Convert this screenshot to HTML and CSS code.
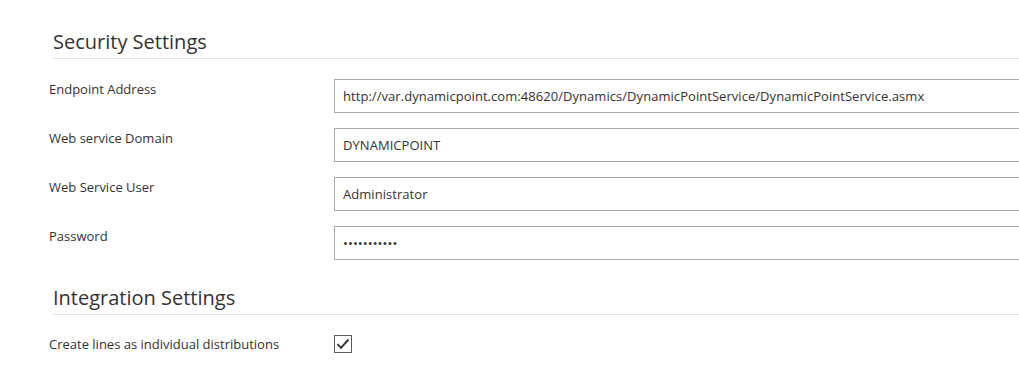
FILE: index.html
```html
<!DOCTYPE html>
<html lang="en">
<head>
    <meta charset="UTF-8">
    <meta name="viewport" content="width=device-width, initial-scale=1.0">
    <title>Settings</title>
    <link rel="stylesheet" href="styles.css">
</head>
<body>

<div class="page">

    <!-- Security -->
    <h2 class="section-title">Security Settings</h2>
    <div class="form-row">
        <label for="endpoint">Endpoint Address</label>
        <input type="text" id="endpoint" value="http://var.dynamicpoint.com:48620/Dynamics/DynamicPointService/DynamicPointService.asmx">
    </div>
    <div class="form-row">
        <label for="domain">Web service Domain</label>
        <input type="text" id="domain" value="DYNAMICPOINT">
    </div>
    <div class="form-row">
        <label for="user">Web Service User</label>
        <input type="text" id="user" value="Administrator">
    </div>
    <div class="form-row">
        <label for="password">Password</label>
        <input type="password" id="password" value="secretpass1">
    </div>

    <!-- Integration -->
    <h2 class="section-title second">Integration Settings</h2>
    <div class="form-row check-row">
        <label>Create lines as individual distributions</label>
        <span class="checkbox">
            <svg width="16" height="16" viewBox="0 0 16 16"><path d="M2.5 8.2 L6 11.8 L13.5 3.5" fill="none" stroke="#333" stroke-width="1.9"/></svg>
        </span>
    </div>

</div>

</body>
</html>
```

FILE: styles.css
```css
html, body {
    margin: 0;
    overflow: hidden;
    background: #fff;
}
body {
    font-family: "Open Sans", sans-serif;
    color: #333;
}
.page {
    padding: 28px 0 0 49px;
}
.section-title {
    margin: 0 0 20px 4px;
    padding-bottom: 2px;
    font-size: 20px;
    font-weight: 400;
    line-height: 28px;
    color: #333;
    border-bottom: 1px solid #e3e3e3;
}
.section-title.second {
    margin-top: 24px;
    margin-bottom: 19px;
}
.form-row {
    display: grid;
    grid-template-columns: 285px 720px;
    margin-bottom: 15px;
    font-size: 13px;
}
.form-row label {
    line-height: 20px;
}
.form-row input {
    box-sizing: border-box;
    height: 34px;
    padding: 0 8px;
    border: 1px solid #ababab;
    font-family: inherit;
    font-size: 13px;
    letter-spacing: 0.05px;
    color: #333;
    outline: none;
}
.check-row {
    align-items: center;
}
.checkbox {
    box-sizing: border-box;
    width: 18px;
    height: 18px;
    border: 1px solid #5a5a5a;
    display: flex;
    align-items: center;
    justify-content: center;
}
```
